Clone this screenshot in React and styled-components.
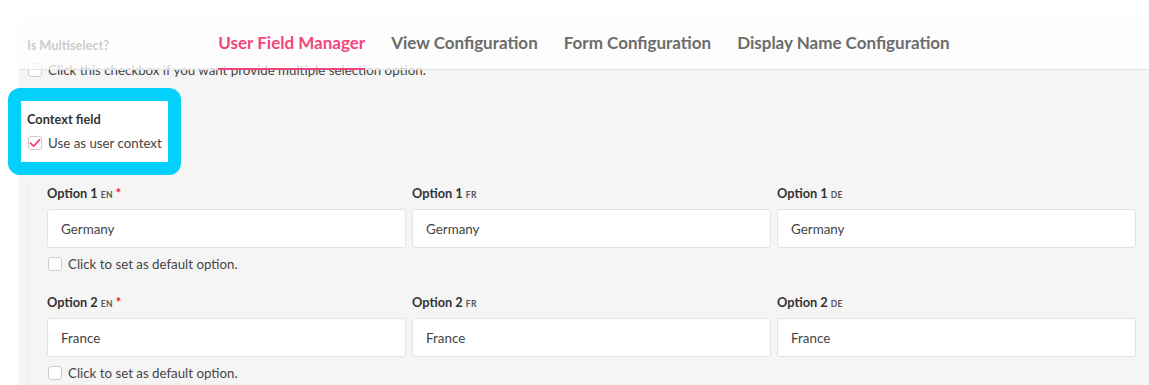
import React from "react";
import styled, { createGlobalStyle } from "styled-components";

const GlobalStyle = createGlobalStyle`
  body {
    margin: 0;
    background: #ffffff;
    font-family: "Lato", "Liberation Sans", sans-serif;
    color: #333;
  }
`;

const Page = styled.div`
  padding: 19px 0 0 19px;
  width: 1149px;
  height: 385px;
  box-sizing: border-box;
  overflow: hidden;
`;

const Panel = styled.div`
  position: relative;
  background: #f5f5f5;
  height: 100%;
`;

const Header = styled.nav`
  position: absolute;
  top: 0;
  left: 0;
  right: 0;
  height: 51px;
  box-sizing: border-box;
  display: flex;
  justify-content: center;
  gap: 26px;
  background: rgba(255, 255, 255, 0.75);
  border-bottom: 1px solid #e4e4e4;
  z-index: 2;
`;

const Tab = styled.div`
  display: flex;
  align-items: center;
  padding-bottom: 3px;
  border-bottom: 2px solid ${(p) => (p.$active ? "#f2457c" : "transparent")};
  margin-bottom: -1px;
  font-size: 17px;
  font-weight: 700;
  color: ${(p) => (p.$active ? "#f2457c" : "#6c6c6c")};
`;

const Content = styled.div`
  padding: 18px 13px 0 8px;
`;

const FieldLabel = styled.div`
  font-size: 12.8px;
  line-height: 16px;
  font-weight: 700;
  white-space: nowrap;
  color: ${(p) => (p.$muted ? "#777" : "#333")};
`;

const CheckRow = styled.label`
  display: flex;
  align-items: center;
  gap: 6px;
  height: 18px;
  font-size: 13.3px;
  white-space: nowrap;
  color: #444;
  margin-top: ${(p) => p.$top || 0}px;
  margin-left: 1px;
`;

const Box = styled.span`
  width: 14px;
  height: 14px;
  box-sizing: border-box;
  border: 1px solid ${(p) => (p.$checked ? "#d8c6cd" : "#c9ced6")};
  border-radius: 3px;
  background: #fff;
  display: flex;
  align-items: center;
  justify-content: center;
  flex-shrink: 0;
`;

const Highlight = styled.div`
  display: inline-block;
  margin: 9px 0 0 -19px;
  padding: 13px;
  border-radius: 12px;
  background: #04d0fc;
`;

const ContextBox = styled.div`
  background: #fff;
  padding: 10px 6px;
  min-width: 134px;
`;

const Options = styled.div`
  margin-top: 10px;
  border-left: 1px solid #ebebeb;
  padding-left: 19px;
  display: grid;
  grid-template-columns: repeat(3, 1fr);
  column-gap: 6px;
`;

const OptionCell = styled.div`
  display: flex;
  flex-direction: column;
  margin-top: ${(p) => p.$top}px;
`;

const Lang = styled.span`
  font-size: 8.5px;
  letter-spacing: 0.3px;
  margin-left: 3px;
  color: #555;
`;

const Req = styled.span`
  color: #e01b1b;
  margin-left: 3px;
`;

const Input = styled.div`
  margin-top: 6px;
  height: 39px;
  box-sizing: border-box;
  background: #fff;
  border: 1px solid #dde4ec;
  border-radius: 3px;
  padding: 0 13px;
  display: flex;
  align-items: center;
  font-size: 13.4px;
  color: #444;
`;

const Check = () => (
  <svg width="12" height="10" viewBox="0 0 12 10">
    <path d="M1.5 5.2 L4.6 8.2 L10.5 1.8" fill="none" stroke="#f2457c" strokeWidth="1.8" strokeLinecap="round" strokeLinejoin="round" />
  </svg>
);

const Checkbox = ({ checked, children, top }) => (
  <CheckRow $top={top}>
    <Box $checked={checked}>{checked && <Check />}</Box>
    {children}
  </CheckRow>
);

const options = [
  { n: 1, value: "Germany" },
  { n: 2, value: "France" },
];
const langs = ["EN", "FR", "DE"];

export default function App() {
  return (
    <>
      <GlobalStyle />
      <Page>
        <Panel>
          <Header>
            <Tab $active>User Field Manager</Tab>
            <Tab>View Configuration</Tab>
            <Tab>Form Configuration</Tab>
            <Tab>Display Name Configuration</Tab>
          </Header>
          <Content>
            <FieldLabel>Is Multiselect?</FieldLabel>
            <Checkbox top={8}>Click this checkbox if you want provide multiple selection option.</Checkbox>
            <Highlight>
              <ContextBox>
                <FieldLabel>Context field</FieldLabel>
                <Checkbox checked top={7}>Use as user context</Checkbox>
              </ContextBox>
            </Highlight>
            <Options>
              {options.map((o, i) => (
                <React.Fragment key={o.n}>
                  {langs.map((l) => (
                    <OptionCell key={l} $top={i === 0 ? 0 : 21}>
                      <FieldLabel>
                        Option {o.n}
                        <Lang>{l}</Lang>
                        {l === "EN" && <Req>*</Req>}
                      </FieldLabel>
                      <Input>{o.value}</Input>
                      {l === "EN" && <Checkbox top={7}>Click to set as default option.</Checkbox>}
                    </OptionCell>
                  ))}
                </React.Fragment>
              ))}
            </Options>
          </Content>
        </Panel>
      </Page>
    </>
  );
}
